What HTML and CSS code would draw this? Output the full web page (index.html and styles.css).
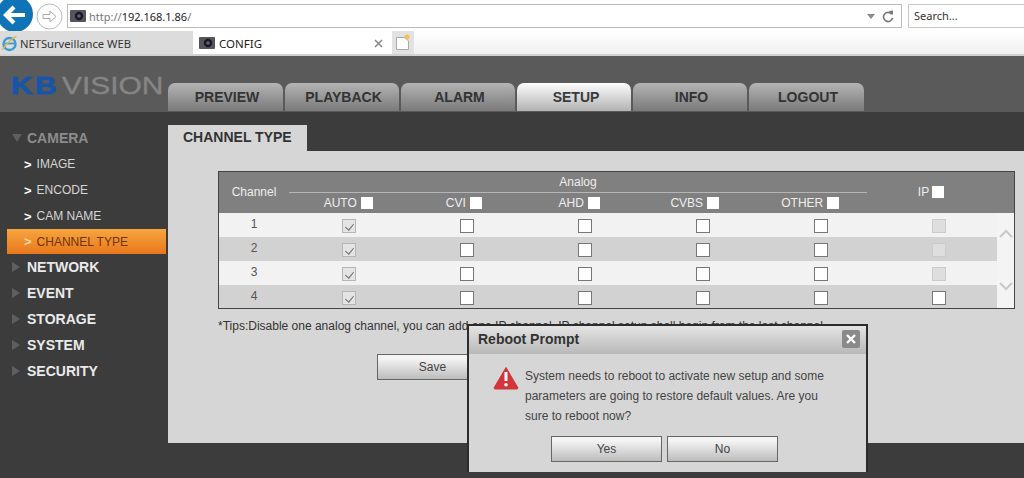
FILE: index.html
```html
<!DOCTYPE html>
<html lang="en">
<head>
<meta charset="utf-8">
<title>CONFIG</title>
<link rel="stylesheet" href="styles.css">
</head>
<body>
<div class="page">
  <header class="browser">
    <div class="addr-row">
      <svg class="back" width="34" height="33" viewBox="0 0 34 33"><circle cx="15" cy="14" r="18" fill="#0f73b8"/><path d="M6 15H25M14 7L6 15L14 23" fill="none" stroke="#fff" stroke-width="4.2"/></svg>
      <svg class="fwd" width="27" height="27" viewBox="0 0 27 27"><circle cx="13.5" cy="13.5" r="12.5" fill="#fff" stroke="#b9b9b9"/><path d="M7 11.5H14V8L20 13.5L14 19V15.5H7Z" fill="none" stroke="#aaa"/></svg>
      <div class="url-box">
        <svg class="cam" width="16" height="12" viewBox="0 0 16 12"><rect width="16" height="12" rx="1" fill="#55565c"/><circle cx="9" cy="6" r="4.2" fill="#191922"/><circle cx="9" cy="6" r="1.8" fill="#6b5a88"/></svg>
        <span class="url"><span class="url-dim">http://</span>192.168.1.86<span class="url-dim">/</span></span>
        <span class="url-tools"><svg width="8" height="5" viewBox="0 0 8 5"><path d="M0 0H8L4 5Z" fill="#8a8a8a"/></svg><svg width="12" height="13" viewBox="0 0 12 13"><path d="M9.8 4.2A4.6 4.6 0 1 0 10.6 8" fill="none" stroke="#777" stroke-width="1.6"/><path d="M7 1L11 .6V5Z" fill="#777"/></svg></span>
      </div>
      <div class="search">Search...</div>
    </div>
    <div class="tab-row">
      <div class="btab">
        <svg width="17" height="17" viewBox="0 0 17 17"><circle cx="8.5" cy="9" r="6" fill="none" stroke="#3a9bd8" stroke-width="2.4"/><path d="M4 8.5H13" stroke="#3a9bd8" stroke-width="1.8"/><path d="M1 15C3 12 10 3 15.500 1.500" fill="none" stroke="#e5b84a" stroke-width="1.300"/></svg>
        <span>NETSurveillance WEB</span>
      </div>
      <div class="btab btab-active">
        <svg width="16" height="12" viewBox="0 0 16 12"><rect width="16" height="12" rx="1" fill="#55565c"/><circle cx="9" cy="6" r="4.2" fill="#191922"/><circle cx="9" cy="6" r="1.800" fill="#6b5a88"/></svg>
        <span class="btab-title">CONFIG</span>
        <svg class="btab-x" width="9" height="9" viewBox="0 0 9 9"><path d="M1 1L8 8M8 1L1 8" stroke="#8b8b8b" stroke-width="1.600"/></svg>
      </div>
      <div class="newtab"><svg width="16" height="17" viewBox="0 0 16 17"><path d="M1.500 3.500H10L13.500 7V15.500H1.500Z" fill="#fff" stroke="#aaa"/><circle cx="12" cy="3" r="2.500" fill="#f2c14e"/></svg></div>
    </div>
  </header>

  <div class="app">
    <nav class="topbar">
      <div class="logo-slot"><div class="logo"><span class="logo-kb">KB</span><span class="logo-vision">VISION</span></div></div>
      <div class="tabs">
        <span class="tab">PREVIEW</span>
        <span class="tab">PLAYBACK</span>
        <span class="tab">ALARM</span>
        <span class="tab tab-active">SETUP</span>
        <span class="tab">INFO</span>
        <span class="tab">LOGOUT</span>
      </div>
    </nav>

    <div class="body">
      <aside class="side">
        <div class="group group-open"><i class="tri-down"></i>CAMERA</div>
        <div class="item"><b>&gt;</b>IMAGE</div>
        <div class="item"><b>&gt;</b>ENCODE</div>
        <div class="item"><b>&gt;</b>CAM NAME</div>
        <div class="item item-active"><b>&gt;</b>CHANNEL TYPE</div>
        <div class="group"><i class="tri-right"></i>NETWORK</div>
        <div class="group"><i class="tri-right"></i>EVENT</div>
        <div class="group"><i class="tri-right"></i>STORAGE</div>
        <div class="group"><i class="tri-right"></i>SYSTEM</div>
        <div class="group"><i class="tri-right"></i>SECURITY</div>
      </aside>

      <main class="main">
        <div class="main-tab">CHANNEL TYPE</div>
        <section class="panel">
          <div class="ctable">
            <div class="thead">
              <div class="th-channel">Channel</div>
              <div class="th-analog">
                <div class="analog-title">Analog</div>
                <div class="analog-cols">
                  <span class="th-col">AUTO<i class="hbox"></i></span>
                  <span class="th-col">CVI<i class="hbox"></i></span>
                  <span class="th-col">AHD<i class="hbox"></i></span>
                  <span class="th-col">CVBS<i class="hbox"></i></span>
                  <span class="th-col">OTHER<i class="hbox"></i></span>
                </div>
              </div>
              <div class="th-ip">IP<i class="hbox"></i></div>
            </div>
            <div class="tbody">
              <div class="rows">
                <div class="row"><span class="num">1</span><span class="cell"><i class="cb cb-on"></i></span><span class="cell"><i class="cb"></i></span><span class="cell"><i class="cb"></i></span><span class="cell"><i class="cb"></i></span><span class="cell"><i class="cb"></i></span><span class="cell"><i class="cb cb-off"></i></span></div>
                <div class="row row-alt"><span class="num">2</span><span class="cell"><i class="cb cb-on"></i></span><span class="cell"><i class="cb"></i></span><span class="cell"><i class="cb"></i></span><span class="cell"><i class="cb"></i></span><span class="cell"><i class="cb"></i></span><span class="cell"><i class="cb cb-off"></i></span></div>
                <div class="row"><span class="num">3</span><span class="cell"><i class="cb cb-on"></i></span><span class="cell"><i class="cb"></i></span><span class="cell"><i class="cb"></i></span><span class="cell"><i class="cb"></i></span><span class="cell"><i class="cb"></i></span><span class="cell"><i class="cb cb-off"></i></span></div>
                <div class="row row-alt"><span class="num">4</span><span class="cell"><i class="cb cb-on"></i></span><span class="cell"><i class="cb"></i></span><span class="cell"><i class="cb"></i></span><span class="cell"><i class="cb"></i></span><span class="cell"><i class="cb"></i></span><span class="cell"><i class="cb"></i></span></div>
              </div>
              <div class="scroll">
                <svg width="14" height="9" viewBox="0 0 14 9"><path d="M1 8L7 2L13 8" fill="none" stroke="#c9c9c9" stroke-width="2"/></svg>
                <svg width="14" height="9" viewBox="0 0 14 9"><path d="M1 1L7 7L13 1" fill="none" stroke="#c9c9c9" stroke-width="2"/></svg>
              </div>
            </div>
          </div>
          <p class="tips">*Tips:Disable one analog channel, you can add one IP channel. IP channel setup shall begin from the last channel.</p>
          <div class="actions">
            <button class="btn btn-save">Save</button>
          </div>
        </section>
      </main>
    </div>

    <div class="dialog">
      <div class="dlg-title">
        <span>Reboot Prompt</span>
        <span class="dlg-close"><svg width="10" height="10" viewBox="0 0 10 10"><path d="M1 1L9 9M9 1L1 9" stroke="#fff" stroke-width="2.400"/></svg></span>
      </div>
      <div class="dlg-body">
        <svg class="warn" width="26" height="24" viewBox="0 0 26 24"><path d="M13 1.500L25 22A1.200 1.200 0 0 1 24 23H2A1.200 1.200 0 0 1 1 22Z" fill="#d8333a" stroke="#c2383c" stroke-linejoin="round"/><path d="M13 6V15" stroke="#fff" stroke-width="3"/><circle cx="13" cy="18.800" r="1.800" fill="#fff"/></svg>
        <p class="dlg-text">System needs to reboot to activate new setup and some parameters are going to restore default values. Are you sure to reboot now?</p>
      </div>
      <div class="dlg-actions">
        <button class="btn">Yes</button>
        <button class="btn">No</button>
      </div>
    </div>
  </div>
</div>
</body>
</html>
```
FILE: styles.css
```css
* { box-sizing: border-box; }
html, body { margin: 0; height: 100%; overflow: hidden; }
body { font-family: "Liberation Sans", Arial, sans-serif; background: #3c3c3c; }
.page { width: 1024px; height: 478px; display: flex; flex-direction: column; overflow: hidden; }

/* browser chrome */
.browser { height: 56px; background: #fff; font-family: "Noto Sans", sans-serif; color: #333; flex: none; }
.addr-row { height: 31px; display: flex; align-items: flex-start; }
.back { flex: none; }
.fwd { flex: none; margin: 3px 0 0 2px; }
.url-box { flex: none; width: 835px; height: 24px; margin: 4px 0 0 4px; border: 1px solid #bcbcbc; display: flex; align-items: center; padding: 0 7px 0 2px; font-size: 11px; }
.cam { flex: none; }
.url { margin-left: 3px; color: #222; font-size: 11px; }
.url-dim { color: #777; }
.url-tools { margin-left: auto; display: flex; align-items: center; gap: 7px; }
.search { flex: none; width: 130px; height: 24px; margin: 4px 0 0 6px; border: 1px solid #c8c8c8; padding: 1px 5px 0; font-size: 11px; line-height: 19px; }
.tab-row { height: 25px; display: flex; background: linear-gradient(#fff, #f0f0f0); border-bottom: 2px solid #d2d2d2; }
.btab { width: 193px; height: 23px; background: #dcdcdc; display: flex; align-items: center; gap: 2px; font-size: 11.200px; padding: 1px 0 0 1px; }
.btab-active { width: 199px; background: #fff; padding: 1px 9px 0 6px; gap: 4px; font-size: 11.500px; }
.btab-title { color: #222; }
.btab-x { margin-left: auto; }
.newtab { width: 22px; height: 23px; background: #e2e2e2; display: flex; align-items: center; justify-content: center; }

/* application */
.app { flex: 1; display: flex; flex-direction: column; position: relative; min-height: 0; }
.topbar { height: 56px; flex: none; background: #5a5a5a; display: flex; align-items: flex-end; padding: 0 0 1px 11px; }
.logo-slot { width: 157px; align-self: flex-start; margin-top: 15px; }
.logo { display: inline-block; font-size: 24.500px; line-height: 30px; white-space: nowrap; transform: scaleX(1.220); transform-origin: left center; }
.logo-kb { color: #1a55a5; font-weight: 700; -webkit-text-stroke: 1px #1a55a5; letter-spacing: 2px; margin-right: 2.500px; }
.logo-vision { color: #858585; -webkit-text-stroke: 0.400px #858585; }
.tabs { display: flex; gap: 2px; }
.tab { width: 114px; height: 28px; border-radius: 7px 7px 0 0; background: linear-gradient(#b4b4b4, #7a7a7a); color: #333; font-size: 14px; font-weight: 700; display: flex; align-items: center; justify-content: center; padding-left: 3px; }
.tab-active { background: linear-gradient(#fdfdfd, #b2b2b2); color: #3a3a3a; padding-left: 4px; }
.tab:first-child, .tab:last-child { width: 115px; }

.body { flex: 1; display: flex; min-height: 0; background: #3c3c3c; }
.side { width: 168px; flex: none; padding-top: 13px; }
.group { height: 26px; display: flex; align-items: center; padding-left: 12px; color: #eaeaea; font-size: 14px; font-weight: 700; gap: 7px; }
.group-open { color: #8c8c8c; gap: 6px; }
.tri-down { width: 0; height: 0; border: 5px solid transparent; border-top: 8px solid #5f5f5f; border-bottom: 0; margin-right: -1px; }
.tri-right { width: 0; height: 0; border: 5px solid transparent; border-left: 8px solid #5f5f5f; border-right: 0; }
.item { height: 26px; display: flex; align-items: center; padding-left: 24px; gap: 5px; color: #d5d5d5; font-size: 12px; }
.item b { color: #fff; font-size: 13px; }
.item-active { width: 159px; margin-left: 7px; padding-left: 17px; background: linear-gradient(#f6a63e, #e8771c); color: #74320c; height: 25px; }
.item-active b { color: #ffd9a8; }

.main { flex: 1; padding-top: 13px; }
.main-tab { width: 139px; height: 26px; background: #d6d6d6; color: #333; font-size: 14px; font-weight: 700; padding-left: 15px; line-height: 24px; }
.panel { height: 292px; background: #d6d6d6; padding: 20px 0 0 50px; }
.ctable { width: 797px; height: 138px; border: 1px solid #444; background: #f4f4f4; }
.thead { height: 41px; background: #808080; color: #eee; display: flex; font-size: 12px; }
.th-channel { width: 70px; text-align: center; line-height: 40px; }
.th-analog { width: 578px; display: flex; flex-direction: column; }
.analog-title { height: 21px; border-bottom: 1px solid #b5b5b5; text-align: center; line-height: 20px; }
.analog-cols { display: flex; width: 578px; height: 19px; }
.th-col { width: 115.500px; flex: none; display: flex; align-items: center; justify-content: center; gap: 4px; padding-left: 3px; }
.th-ip { margin-left: 5px; width: 118px; display: flex; align-items: center; justify-content: center; gap: 3px; padding-bottom: 1px; }
.hbox { width: 12px; height: 12px; background: #fff; display: block; }
.tbody { display: flex; height: 95px; }
.rows { width: 778px; }
.row { height: 24px; display: flex; background: #f2f2f2; }
.row:last-child { height: 23px; }
.row-alt { background: #d2d2d2; }
.num { width: 70px; text-align: center; font-size: 12px; color: #555; line-height: 22px; }
.cell { width: 118px; display: flex; align-items: center; justify-content: center; padding: 2px 0 0 1px; }
.cb { display: block; width: 14px; height: 14px; background: #fff; border: 1px solid #777; }
.cb-on { background-color: #e4e4e4; border-color: #b5b5b5; }
.cb-on::after { content: ""; display: block; width: 4px; height: 7px; border: solid #666; border-width: 0 1.500px 1.500px 0; transform: rotate(40deg); margin: 2px 0 0 4px; }
.cb-off { background: #dedede; border-color: #cbcbcb; }
.scroll { flex: 1; background: #f4f4f4; display: flex; flex-direction: column; justify-content: space-between; align-items: center; padding: 16px 0 17px; }
.tips { margin: 10px 0 0; font-size: 12px; line-height: 14px; color: #333; white-space: nowrap; }
.actions { margin-top: 21px; padding-left: 159px; }
.btn { width: 111px; height: 26px; font-family: inherit; font-size: 12px; color: #444; border: 1px solid #666; background: linear-gradient(#f4f4f4 0%, #f4f4f4 15%, #bcbcbc 100%); padding: 0; }

/* dialog */
.dialog { position: absolute; left: 467px; top: 268px; width: 401px; height: 148px; background: #d6d6d6; border: 2px solid #2c2c2c; border-bottom: 0; }
.dlg-title { height: 28px; background: linear-gradient(#e4e4e4, #b8b8b8); display: flex; align-items: center; justify-content: space-between; padding: 0 6px 2px 9px; color: #333; font-size: 14px; font-weight: 700; }
.dlg-close { width: 18px; height: 18px; background: #8a8a8a; border-radius: 2px; display: flex; align-items: center; justify-content: center; }
.dlg-body { display: flex; padding: 12px 40px 0 24px; gap: 6px; height: 74px; }
.warn { flex: none; }
.dlg-text { margin: 0; font-size: 12px; line-height: 20px; color: #444; }
.dlg-actions { display: flex; gap: 5px; padding-left: 82px; margin-top: 8px; }
```
